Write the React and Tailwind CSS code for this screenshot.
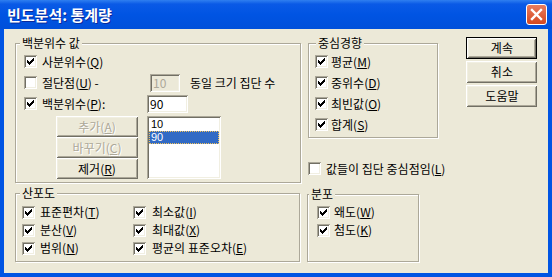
import React from 'react';

// classic 3D edges on the XP beige scheme
const raised =
  'shadow-[inset_1px_1px_0_#fff,inset_-1px_-1px_0_#716f64,inset_2px_2px_0_#f1efe2,inset_-2px_-2px_0_#aca899]';
const sunken =
  'shadow-[inset_1px_1px_0_#aca899,inset_-1px_-1px_0_#fff,inset_2px_2px_0_#716f64,inset_-2px_-2px_0_#f1efe2]';

function Check({ on }) {
  return (
    <span className={`relative block w-[13px] h-[13px] shrink-0 bg-white ${sunken}`}>
      {on && (
        <svg width="13" height="13" viewBox="0 0 13 13" className="absolute inset-0" shapeRendering="crispEdges">
          <path d="M3 5h1v3H3zM4 6h1v3H4zM5 7h1v3H5zM6 6h1v3H6zM7 5h1v3H7zM8 4h1v3H8zM9 3h1v3H9z" fill="#000" />
        </svg>
      )}
    </span>
  );
}

function Label({ t, k, after }) {
  return (
    <span className="leading-[14px] whitespace-nowrap">
      {t}(<span className="underline underline-offset-[1px]">{k}</span>){after}
    </span>
  );
}

function Btn({ children, def, disabled, className }) {
  return (
    <div
      className={`flex items-center justify-center bg-[#ece9d8] leading-[14px] ${raised} ${
        def ? 'border border-black' : ''
      } ${disabled ? 'text-[#aca899] [text-shadow:1px_1px_0_#fff]' : 'text-black'} ${className}`}
    >
      {children}
    </div>
  );
}

function Group({ title, legend, className, children }) {
  return (
    <div className={`relative border border-[#aca899] shadow-[inset_1px_1px_0_#fff,1px_1px_0_#fff] ${className}`}>
      <span className={`absolute -top-[8px] px-[2px] bg-[#ece9d8] leading-[14px] whitespace-nowrap ${legend}`}>
        {title}
      </span>
      {children}
    </div>
  );
}

function Row({ on, t, k, after, gap = 'ml-[5px]', h = 'h-[21px]', w = '' }) {
  return (
    <div className={`flex items-center ${h}`}>
      <Check on={on} />
      <span className={`${gap} ${w}`}>
        <Label t={t} k={k} after={after} />
      </span>
    </div>
  );
}

export default function App() {
  return (
    <div className="w-[552px] h-[277px] flex flex-col bg-[#0054e3] font-['Noto_Sans_CJK_KR',sans-serif] text-[12px] text-black select-none">
      {/* Title bar */}
      <div className="h-[29px] shrink-0 flex items-center justify-between pl-[7px] pr-[5px] bg-[linear-gradient(to_bottom,#2f7ff0_0%,#0a5ae6_14%,#0054e3_50%,#0050da_100%)]">
        <span className="text-white font-bold text-[15px] leading-[18px] [text-shadow:1px_1px_0_#0a2a9a]">
          빈도분석: 통계량
        </span>
        <div className="w-[21px] h-[21px] rounded-[3px] border border-white bg-[linear-gradient(to_bottom,#e97d5f,#d4471f)] flex items-center justify-center">
          <svg width="13" height="13" viewBox="0 0 13 13">
            <path d="M2 2l9 9M11 2l-9 9" stroke="#fff" strokeWidth="2.4" strokeLinecap="square" />
          </svg>
        </div>
      </div>

      {/* Body */}
      <div className="flex-1 mx-[4px] mb-[4px] bg-[#ece9d8] flex">
        {/* Left column */}
        <div className="ml-[11px] pt-[14px] flex flex-col gap-[10px]">
          <Group title="백분위수 값" legend="left-[4px]" className="w-[286px] h-[140px]">
            <div className="pt-[7px] pl-[8px]">
              <Row on t="사분위수" k="Q" />
              <div className="flex items-center h-[21px]">
                <Check />
                <span className="ml-[5px] w-[108px]">
                  <Label t="절단점" k="U" after=" -" />
                </span>
                <div className={`w-[30px] h-[18px] flex items-center pl-[3px] text-[#aca899] leading-[14px] bg-[#ece9d8] ${sunken}`}>
                  10
                </div>
                <span className="ml-[10px] leading-[14px] whitespace-nowrap">동일 크기 집단 수</span>
              </div>
              <div className="flex items-center h-[21px]">
                <Check on />
                <span className="ml-[5px] w-[105px]">
                  <Label t="백분위수" k="P" after=":" />
                </span>
                <div className={`w-[41px] h-[18px] flex items-center pl-[3px] leading-[14px] bg-white ${sunken}`}>90</div>
              </div>
              <div className="flex mt-[2px]">
                <div className="ml-[32px] w-[82px] flex flex-col">
                  <Btn disabled className="h-[21px]">
                    <Label t="추가" k="A" />
                  </Btn>
                  <Btn disabled className="h-[21px]">
                    <Label t="바꾸기" k="C" />
                  </Btn>
                  <Btn className="h-[21px]">
                    <Label t="제거" k="R" />
                  </Btn>
                </div>
                <div className={`ml-[9px] w-[74px] h-[63px] bg-white p-[2px] overflow-hidden font-['Liberation_Sans',sans-serif] text-[11px] ${sunken}`}>
                  <div className="h-[13px] pl-[2px] leading-[13px]">10</div>
                  <div className="h-[13px] pl-[1px] leading-[11px] bg-[#316ac5] text-white border border-dotted border-[#f2c25a]">
                    90
                  </div>
                </div>
              </div>
            </div>
          </Group>

          <Group title="산포도" legend="left-[4px]" className="w-[285px] h-[69px]">
            <div className="pt-[9px] pl-[6px] grid grid-cols-[111px_1fr]">
              <Row on t="표준편차" k="T" h="h-[18px]" />
              <Row on t="최소값" k="I" h="h-[18px]" gap="ml-[6px]" />
              <Row on t="분산" k="V" h="h-[18px]" />
              <Row on t="최대값" k="X" h="h-[18px]" gap="ml-[6px]" />
              <Row on t="범위" k="N" h="h-[18px]" />
              <Row on t="평균의 표준오차" k="E" h="h-[18px]" gap="ml-[6px]" />
            </div>
          </Group>
        </div>

        {/* Middle column */}
        <div className="ml-[7px] pt-[14px] flex flex-col">
          <Group title="중심경향" legend="left-[7px]" className="w-[130px] h-[95px]">
            <div className="pt-[7px] pl-[6px]">
              <Row on t="평균" k="M" gap="ml-[3px]" />
              <Row on t="중위수" k="D" gap="ml-[3px]" />
              <Row on t="최빈값" k="O" gap="ml-[3px]" />
              <Row on t="합계" k="S" gap="ml-[3px]" />
            </div>
          </Group>
          <div className="mt-[24px]">
            <Row t="값들이 집단 중심점임" k="L" h="h-[13px]" />
          </div>
          <Group title="분포" legend="left-[1px]" className="mt-[19px] -ml-[1px] w-[112px] h-[68px]">
            <div className="pt-[8px] pl-[9px]">
              <Row on t="왜도" k="W" h="h-[18px]" gap="ml-[4px]" />
              <Row on t="첨도" k="K" h="h-[18px]" gap="ml-[4px]" />
            </div>
          </Group>
        </div>

        {/* Buttons */}
        <div className="ml-[21px] pt-[8px] flex flex-col gap-[2px]">
          <Btn def className="w-[71px] h-[22px]">계속</Btn>
          <Btn className="w-[71px] h-[22px]">취소</Btn>
          <Btn className="w-[71px] h-[22px]">도움말</Btn>
        </div>
      </div>
    </div>
  );
}
